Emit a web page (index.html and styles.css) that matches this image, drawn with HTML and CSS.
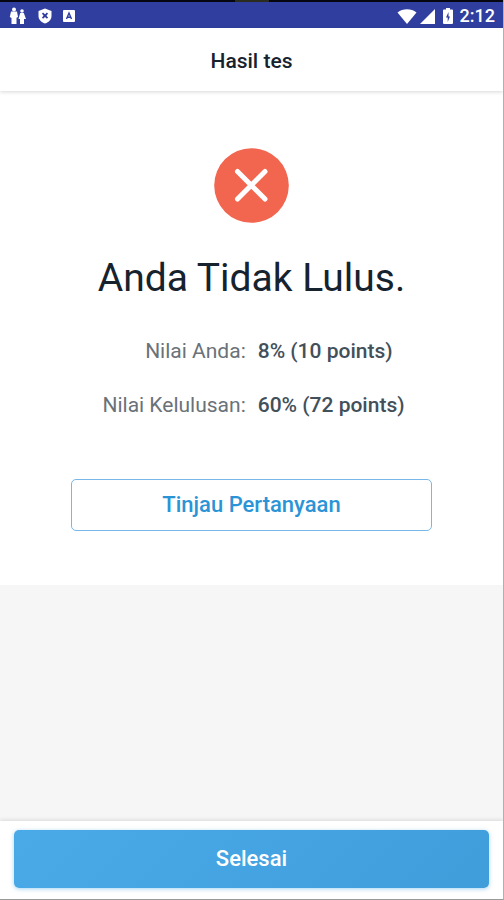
FILE: index.html
```html
<!DOCTYPE html>
<html lang="id">
<head>
<meta charset="utf-8">
<meta name="viewport" content="width=device-width, initial-scale=1">
<title>Hasil tes</title>
<link rel="stylesheet" href="styles.css">
</head>
<body>
<div class="status-bar">
  <div class="status-group status-left">
    <svg width="18" height="18" viewBox="0 0 18 18" fill="#fff" aria-hidden="true"><circle cx="5" cy="2.5" r="2"/><path d="M2 4.500h6l1 5.500-1.500.8V17h-5v-6L.8 10z"/><circle cx="13" cy="4" r="1.800"/><path d="M11.200 6h3.600l2.200 6h-2v5h-4v-5H9.500z"/></svg>
    <svg width="14" height="16" viewBox="0 0 14 16" aria-hidden="true"><path d="M7 .5 13.500 3v5c0 3.500-2.500 6-6.500 7.500C3 14 .5 11.500.5 8V3z" fill="#fff"/><path d="m4.500 5.200 5 5m0-5-5 5" stroke="#303f9f" stroke-width="1.700"/><circle cx="7" cy="7.700" r="1.500" fill="#303f9f"/></svg>
    <svg width="12" height="14" viewBox="0 0 12 14" aria-hidden="true"><rect y="1" width="12" height="12" rx="1" fill="#fff"/><path d="M3.500 10 6 4l2.500 6M4.300 8.300h3.400" fill="none" stroke="#303f9f" stroke-width="1.400"/></svg>
  </div>
  <div class="status-group status-right">
    <svg width="20" height="15" viewBox="0 0 20 15" fill="#fff" aria-hidden="true"><path d="M.5 3.500C6-.8 14-.8 19.500 3.500L10 15z"/></svg>
    <svg width="15" height="15" viewBox="0 0 15 15" fill="#fff" aria-hidden="true"><path d="M15 0v15H0z"/></svg>
    <svg class="battery" width="10" height="16" viewBox="0 0 10 16" aria-hidden="true"><path d="M3 0h4v1.500h2q1 0 1 1V15q0 1-1 1H1q-1 0-1-1V2.500q0-1 1-1h2z" fill="#fff"/><path d="M5.500 4 3 9.500h1.700V14L7 8.500H5.500z" fill="#303f9f"/></svg>
    <span>2:12</span>
  </div>
</div>
<header class="title-bar"><h1>Hasil tes</h1></header>
<main>
  <section class="result">
    <svg class="result-icon" viewBox="0 0 75 75" aria-hidden="true"><circle cx="37.500" cy="37.500" r="37.300" fill="#f2654e"/><path d="m23.500 23.500 27.500 27.500m0-27.500-27.500 27.500" stroke="#fff" stroke-width="5" stroke-linecap="round"/></svg>
    <h2>Anda Tidak Lulus.</h2>
    <dl class="scores">
      <dt>Nilai Anda:</dt><dd>8% (10 points)</dd>
      <dt>Nilai Kelulusan:</dt><dd>60% (72 points)</dd>
    </dl>
    <button class="button review" type="button">Tinjau Pertanyaan</button>
  </section>
</main>
<footer class="actions"><button class="button done" type="button">Selesai</button></footer>
</body>
</html>
```
FILE: styles.css
```css
* {
  box-sizing: border-box;
}

body {
  margin: 0;
  min-height: 100vh;
  display: flex;
  flex-direction: column;
  background: #f6f6f6;
  border-right: 1px solid #b0b0b0;
  border-bottom: 1px solid #999;
  font-family: Roboto, "Liberation Sans", sans-serif;
  color: #17222f;
}

.status-bar {
  display: flex;
  justify-content: space-between;
  align-items: center;
  height: 28px;
  padding: 4px 8px 0 9px;
  background:
    linear-gradient(#2a2c20, #2a2c20) 50% 0 / 34px 2px no-repeat,
    linear-gradient(#05060f, #05060f) 0 0 / 100% 2px no-repeat,
    #303f9f;
  color: #fff;
  font-size: 18px;
  font-weight: 500;
  line-height: 20px;
}

.status-group {
  display: flex;
  align-items: center;
}

.status-left {
  gap: 11px;
}

.status-right {
  gap: 3px;
}

.battery {
  margin: 0 4px 0 5px;
}

.title-bar {
  position: relative;
  padding: 21px 16px 18px;
  background: #fff;
  box-shadow: 0 1px 4px rgba(0, 0, 0, 0.16);
  text-align: center;
}

h1 {
  margin: 0;
  font-size: 21px;
  font-weight: 500;
  line-height: 24px;
}

main {
  flex: 1;
}

.result {
  display: flex;
  flex-direction: column;
  align-items: center;
  padding: 57px 71px 54px;
  background: #fff;
}

.result-icon {
  width: 75px;
  height: 75px;
}

h2 {
  margin: 31px 0 0;
  font-size: 39px;
  font-weight: 400;
  line-height: 48px;
  white-space: nowrap;
}

.scores {
  display: grid;
  grid-template-columns: auto auto;
  gap: 30px 12px;
  margin: 37px 0 62px;
  padding-left: 4px;
  font-size: 21px;
  line-height: 24px;
  white-space: nowrap;
}

dt {
  color: #6a7278;
  text-align: right;
}

dd {
  margin: 0;
  color: #435059;
  font-weight: 500;
}

.button {
  width: 100%;
  border-radius: 5px;
  font: 500 22px/28px Roboto, "Liberation Sans", sans-serif;
}

.review {
  padding: 11px 16px;
  border: 1px solid #78b7e8;
  background: #fff;
  color: #2b94d6;
}

.actions {
  padding: 9px 14px 11px;
  background: #fff;
  box-shadow: 0 -1px 4px rgba(0, 0, 0, 0.12);
}

.done {
  padding: 15px 16px;
  border: 0;
  background: linear-gradient(135deg, #4aaae8, #3f9dda);
  box-shadow: 0 1px 4px rgba(74, 170, 232, 0.5);
  color: #fff;
}
```
